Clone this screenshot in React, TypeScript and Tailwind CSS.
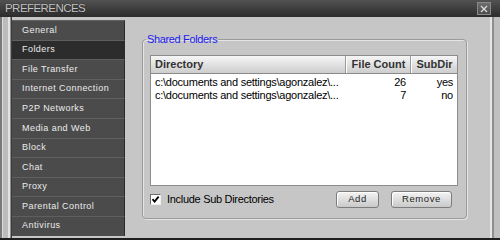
const NAV = [
  "General",
  "Folders",
  "File Transfer",
  "Internet Connection",
  "P2P Networks",
  "Media and Web",
  "Block",
  "Chat",
  "Proxy",
  "Parental Control",
  "Antivirus",
];

const ROWS = [
  { dir: "c:\\documents and settings\\agonzalez\\...", count: 26, sub: "yes" },
  { dir: "c:\\documents and settings\\agonzalez\\...", count: 7, sub: "no" },
];

function CloseButton() {
  return (
    <div className="flex h-[13px] w-[14px] items-center justify-center border border-[#8a8a8a] bg-gradient-to-b from-[#6e6e6e] to-[#4c4c4c]">
      <svg width="8" height="8" viewBox="0 0 8 8">
        <path d="M1 1L7 7M7 1L1 7" stroke="#d8d8d8" strokeWidth="1.4" />
      </svg>
    </div>
  );
}

function Button({ label, width }: { label: string; width: string }) {
  return (
    <button
      className={`${width} flex h-[17px] items-center justify-center rounded-[3px] border border-[#7c7c7c] bg-gradient-to-b from-[#f4f4f4] to-[#c9c9c9] text-[9.5px] tracking-[0.6px] text-[#1e1e1e] shadow-[inset_1px_1px_0_#ffffff]`}
    >
      {label}
    </button>
  );
}

function App() {
  return (
    <main className="flex h-[240px] w-[500px] flex-col overflow-hidden bg-[#c6c6c6] font-['Liberation_Sans',Arial,sans-serif]">
      <header className="flex h-[17px] items-center justify-between bg-gradient-to-b from-[#525252] to-[#2c2c2c] pl-[5px] pr-[9px]">
        <span className="text-[11.5px] leading-none tracking-[-0.55px] text-[#c4c4c4] [text-shadow:0_0_1px_#111]">
          PREFERENCES
        </span>
        <CloseButton />
      </header>

      <div className="flex min-h-0 flex-1">
        <div className="flex w-[12px]">
          <div className="w-[2px] bg-[#7a7a7a]" />
          <div className="w-[1px] bg-[#dcdcdc]" />
          <div className="w-[5px] bg-[#bcbcbc]" />
          <div className="w-[2px] bg-[#e2e2e2]" />
          <div className="w-[1px] bg-[#8e8e8e]" />
          <div className="w-[1px] bg-[#3a3a3a]" />
        </div>

        <nav className="flex w-[113px] flex-col pt-[3px]">
          {NAV.map((item) => (
            <div
              key={item}
              className={`flex h-[19.6px] items-center border-r border-t border-r-[#2a2a2a] border-t-[#5f5f5f] pl-[10px] text-[9px] tracking-[0.45px] text-[#ececec] ${
                item === "Folders" ? "bg-[#2c2c2c]" : "bg-[#4b4b4b]"
              }`}
            >
              {item}
            </div>
          ))}
        </nav>

        <section className="flex-1 pl-[17px] pt-[16px]">
          <fieldset className="w-[325px] rounded-[4px] border border-[#9a9a9a] pb-[10px] pl-[7px] pr-[8px] shadow-[inset_1px_1px_0_#e4e4e4,1px_1px_0_#e4e4e4]">
            <legend className="ml-[-4px] px-[1px] text-[11px] leading-[13px] tracking-[-0.35px] text-[#1c1cf0]">
              Shared Folders
            </legend>

            <div className="mt-[9px] h-[131px] border border-[#8c8c8c] bg-white">
              <div className="flex h-[18px] border-b border-[#8a8a8a] bg-gradient-to-b from-[#f6f6f6] to-[#cdcdcd] text-[11px] font-bold text-[#333]">
                <div className="flex w-[195px] items-center border-r border-[#9a9a9a] pl-[4px]">Directory</div>
                <div className="flex w-[65px] items-center justify-center border-l border-r border-l-white border-r-[#9a9a9a]">
                  File Count
                </div>
                <div className="flex flex-1 items-center justify-center border-l border-white">SubDir</div>
              </div>
              <div className="pt-[2px] text-[11px] leading-[13px] tracking-[-0.25px] text-black">
                {ROWS.map((row, i) => (
                  <div key={i} className="flex h-[13px]">
                    <div className="w-[195px] pl-[4px]">{row.dir}</div>
                    <div className="w-[60px] text-right">{row.count}</div>
                    <div className="flex-1 pr-[4px] text-right">{row.sub}</div>
                  </div>
                ))}
              </div>
            </div>

            <div className="mt-[5px] flex h-[17px] items-center">
              <div className="flex h-[11px] w-[11px] items-center justify-center border border-b-[#f0f0f0] border-l-[#6c6c6c] border-r-[#f0f0f0] border-t-[#6c6c6c] bg-white">
                <svg width="9" height="9" viewBox="0 0 9 9">
                  <path d="M1.5 4.2L3.6 6.6L7.6 1.6" fill="none" stroke="#000" strokeWidth="1.8" />
                </svg>
              </div>
              <span className="ml-[6px] text-[11px] tracking-[-0.3px] text-black">Include Sub Directories</span>
              <div className="ml-auto mr-[6px] flex gap-[12px]">
                <Button label="Add" width="w-[43px]" />
                <Button label="Remove" width="w-[61px]" />
              </div>
            </div>
          </fieldset>
        </section>

        <div className="flex w-[10px]">
          <div className="w-[2px] bg-[#e6e6e6]" />
          <div className="w-[2px] bg-[#8e8e8e]" />
          <div className="w-[6px] bg-[#c0c0c0]" />
        </div>
      </div>

      <div className="h-[2px] bg-[#1e1e1e]" />
    </main>
  );
}

export default App;
